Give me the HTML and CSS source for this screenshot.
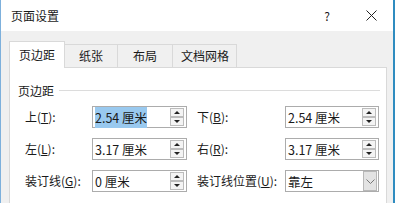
FILE: index.html
```html
<!DOCTYPE html>
<html lang="zh-CN">
<head>
	<meta charset="UTF-8">
	<title>页面设置</title>
	<link rel="stylesheet" href="styles.css">
</head>
<body>
	<div class="dlg">
		<div class="titlebar">
			<span class="title">页面设置</span>
			<span class="help">?</span>
			<span class="close">
				<svg width="11" height="11" viewBox="0 0 11 11"><path d="M0.5 0.5L10.5 10.5M10.5 0.5L0.5 10.5" stroke="#222" stroke-width="1" fill="none"/></svg>
			</span>
		</div>
		<div class="body">
			<ul class="tabs">
				<li class="active">页边距</li>
				<li>纸张</li>
				<li>布局</li>
				<li>文档网格</li>
			</ul>
			<div class="panel">
				<div class="legend"><span>页边距</span></div>
				<div class="grid">
					<label>上(<u>T</u>):</label>
					<div class="box"><span class="val"><span class="sel">2.54 厘米</span></span><span class="spin"><i class="up"></i><i class="dn"></i></span></div>
					<label class="r">下(<u>B</u>):</label>
					<div class="box"><span class="val">2.54 厘米</span><span class="spin"><i class="up"></i><i class="dn"></i></span></div>

					<label>左(<u>L</u>):</label>
					<div class="box"><span class="val">3.17 厘米</span><span class="spin"><i class="up"></i><i class="dn"></i></span></div>
					<label class="r">右(<u>R</u>):</label>
					<div class="box"><span class="val">3.17 厘米</span><span class="spin"><i class="up"></i><i class="dn"></i></span></div>

					<label>装订线(<u>G</u>):</label>
					<div class="box"><span class="val">0 厘米</span><span class="spin"><i class="up"></i><i class="dn"></i></span></div>
					<label class="r">装订线位置(<u>U</u>):</label>
					<div class="box"><span class="val">靠左</span><span class="drop"><svg width="9" height="5" viewBox="0 0 9 5"><path d="M0.5 0.5L4.5 4.5L8.5 0.5" stroke="#777" fill="none"/></svg></span></div>
				</div>
			</div>
		</div>
	</div>
</body>
</html>
```

FILE: styles.css
```css
*{margin: 0;padding: 0;box-sizing: border-box;}
li{list-style: none;}
body { background: #fff; font-family: "Noto Sans CJK SC", "Microsoft YaHei", sans-serif; font-size: 12px; color: #1a1a1a; }
.dlg { width: 395px; height: 203px; border-left: 1px solid #7db0dc; border-right: 2px solid #2f8cc0; overflow: hidden; display: flex; flex-direction: column; }
.titlebar { flex: none; height: 31px; background: #fff; display: flex; align-items: center; padding-left: 10px; }
.title { font-size: 12px; flex: 1; }
.help { font-size: 12px; width: 40px; text-align: center; margin-right: 4px; }
.close { width: 40px; display: flex; justify-content: center; margin-right: 2px; }
.body { flex: 1; min-height: 0; background: #f0f0f0; padding: 10px 0 0 8px; }
.tabs { display: flex; height: 26px; align-items: flex-end; }
.tabs li { height: 23px; line-height: 21px; border: 1px solid #d9d9d9; border-bottom: none; border-left: none; padding: 0 14px; background: #f0f0f0; }
.tabs li:nth-child(2) { padding: 0 14px 0 14px; }
.tabs li:nth-child(3) { padding: 0 15px 0 15px; }
.tabs li:nth-child(4) { padding: 0 7px 0 8px; }
.tabs li.active { height: 27px; line-height: 25px; background: #fff; border-left: 1px solid #d9d9d9; padding: 0 9px 0 9px; position: relative; z-index: 1; margin-bottom: -1px; }
.panel { width: 378px; height: 200px; background: #fff; border: 1px solid #d9d9d9; padding: 14px 6px 0 8px; }
.legend { display: flex; align-items: center; height: 16px; }
.legend::after { content: ""; flex: 1; border-top: 1px solid #dcdcdc; margin-left: 5px; margin-top: 1px; }
.grid { display: grid; grid-template-columns: 67px 95px 98px 94px; grid-auto-rows: 22px; row-gap: 10px; margin: 8px 0 0 7px; align-items: center; }
.grid label { line-height: 22px; }
.grid label.r { padding-left: 10px; }
.box { height: 22px; border: 1px solid #acacac; background: #fff; display: flex; align-items: center; }
.val { flex: 1; padding-left: 2px; font-size: 12.5px; }
.sel { background: #99c9ef; padding: 1px 0; }
.spin { width: 14px; height: 18px; margin-right: 2px; display: flex; flex-direction: column; justify-content: space-between; }
.spin i { display: block; height: 9px; border: 1px solid #bcbcbc; background: #f4f4f4; position: relative; }
.spin i::after { content: ""; position: absolute; left: 3px; border-left: 3px solid transparent; border-right: 3px solid transparent; }
.spin .up::after { top: 2px; border-bottom: 3px solid #222; }
.spin .dn::after { top: 2px; border-top: 3px solid #222; }
.drop { width: 14px; height: 20px; margin-right: 1px; background: #e3e3e3; border: 1px solid #b8b8b8; display: flex; align-items: center; justify-content: center; }
```
